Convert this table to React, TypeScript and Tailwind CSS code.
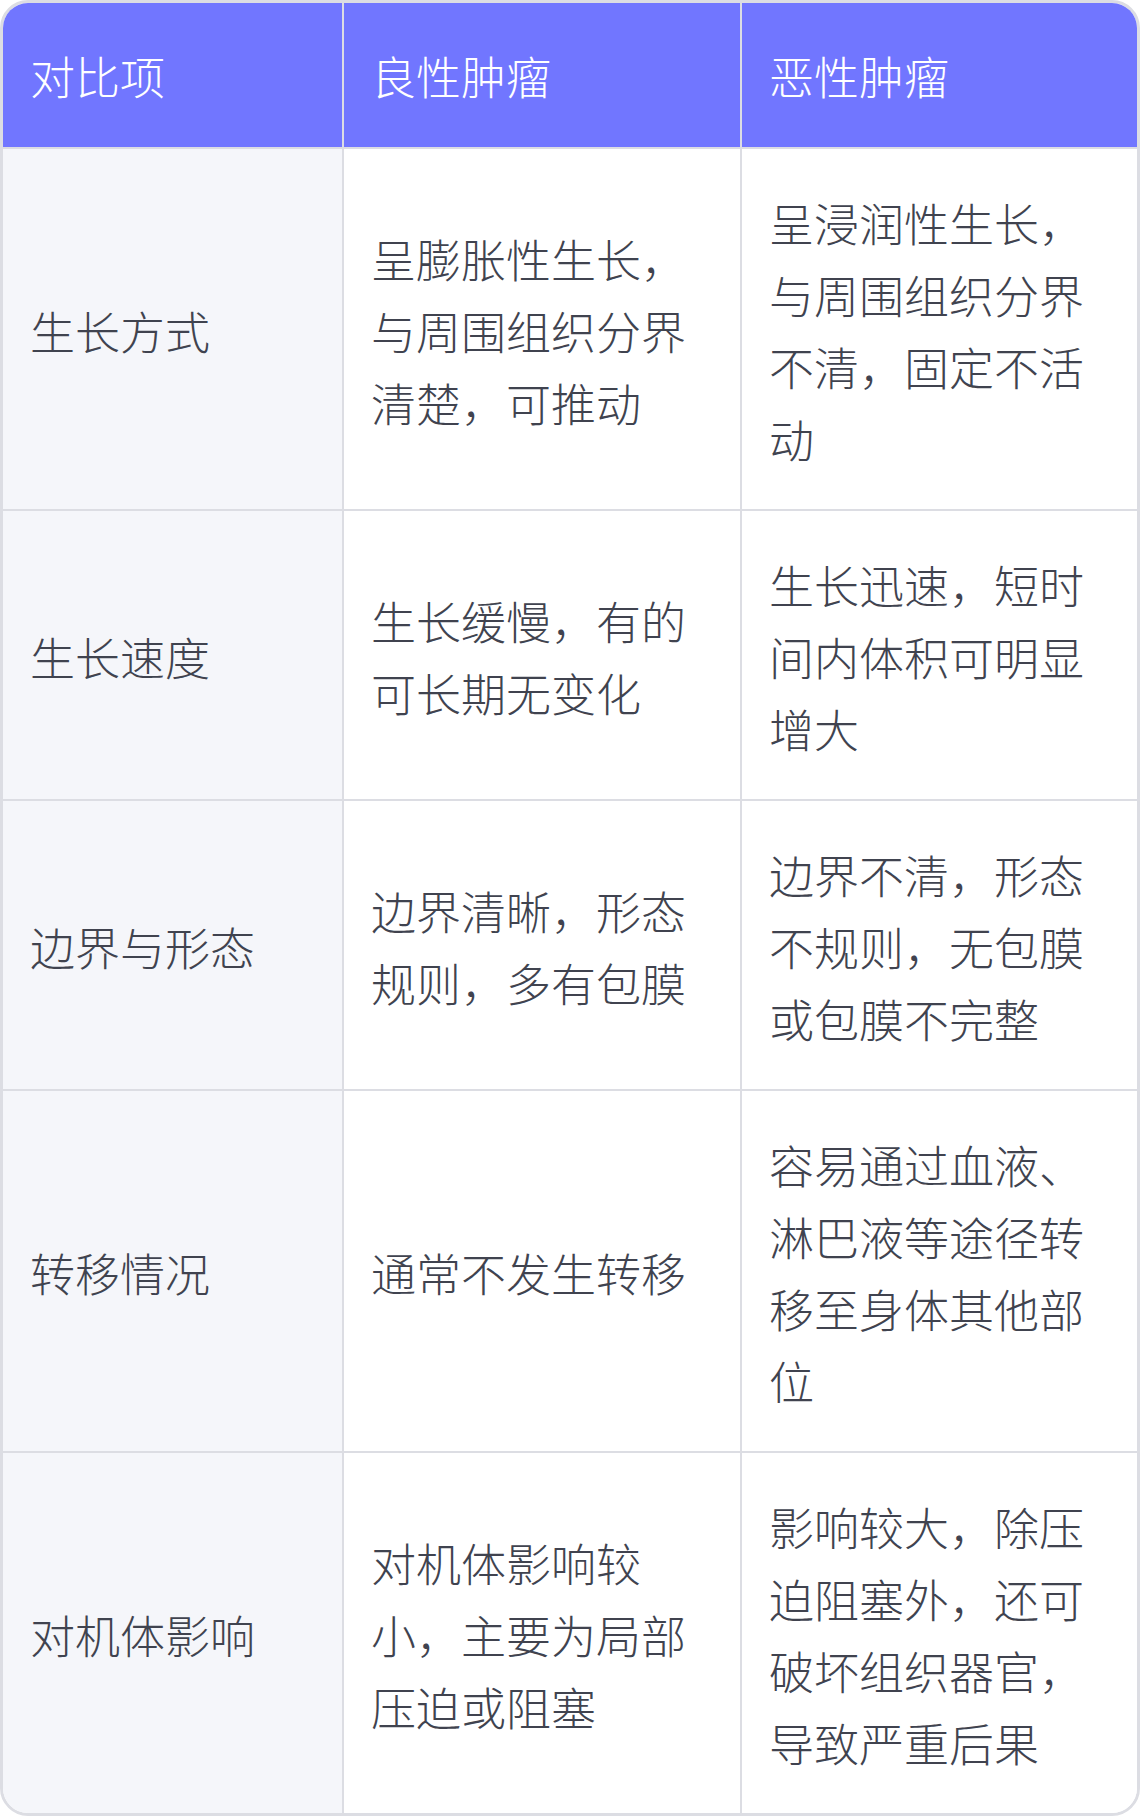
const headers = ["对比项", "良性肿瘤", "恶性肿瘤"];

const rows = [
  ["生长方式", "呈膨胀性生长，与周围组织分界清楚，可推动", "呈浸润性生长，与周围组织分界不清，固定不活动"],
  ["生长速度", "生长缓慢，有的可长期无变化", "生长迅速，短时间内体积可明显增大"],
  ["边界与形态", "边界清晰，形态规则，多有包膜", "边界不清，形态不规则，无包膜或包膜不完整"],
  ["转移情况", "通常不发生转移", "容易通过血液、淋巴液等途径转移至身体其他部位"],
  ["对机体影响", "对机体影响较小，主要为局部压迫或阻塞", "影响较大，除压迫阻塞外，还可破坏组织器官，导致严重后果"],
];

export default function App() {
  return (
    <div
      className="w-[1140px] bg-white"
      style={{ fontFamily: "'Noto Sans CJK SC', 'Noto Sans', sans-serif" }}
    >
      <div className="grid grid-cols-[341px_398px_1fr] overflow-hidden rounded-[28px] border-[3px] border-[#dcdde3] text-[45px] font-light leading-[72px]">
        {headers.map((h, i) => (
          <div
            key={h}
            className={`flex items-center bg-[#7176ff] px-[27px] pt-[37px] pb-[35px] text-white border-b-2 border-[#dcdde3] ${
              i < 2 ? "border-r-2" : ""
            }`}
          >
            {h}
          </div>
        ))}
        {rows.map((row, r) =>
          row.map((cell, c) => (
            <div
              key={`${r}-${c}`}
              className={`flex items-center px-[27px] pt-[38px] pb-[34px] text-[#40434f] border-[#dcdde3] ${
                c === 0 ? "bg-[#f5f6fa]" : "bg-white"
              } ${c < 2 ? "border-r-2" : ""} ${r < rows.length - 1 ? "border-b-2" : ""}`}
            >
              <span>{cell}</span>
            </div>
          ))
        )}
      </div>
    </div>
  );
}
